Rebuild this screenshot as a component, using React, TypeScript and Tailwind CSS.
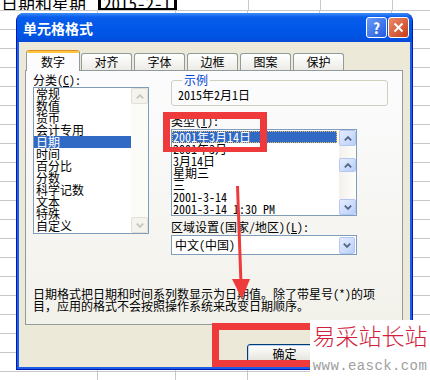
import React from "react";

const cjk = "font-['Noto_Sans_Mono_CJK_SC','Noto_Sans_CJK_SC',sans-serif]";

const cols = [98, 78, 72, 72, 72, 72];

const categories = ["常规", "数值", "货币", "会计专用", "日期", "时间", "百分比", "分数", "科学记数", "文本", "特殊", "自定义"];
const types = ["2001年3月14日", "2001年3月", "3月14日", "星期三", "三", "2001-3-14", "2001-3-14 1:30 PM"];

const Chevron = ({ down, color }: { down?: boolean; color: string }) => (
  <svg width="8" height="5" viewBox="0 0 8 5" className={down ? "rotate-180" : ""}>
    <path d="M0.8 4.3 L4 1.1 L7.2 4.3" fill="none" stroke={color} strokeWidth="1.7" />
  </svg>
);

const BlueBtn = ({ down, className = "" }: { down?: boolean; className?: string }) => (
  <div className={`flex items-center justify-center rounded-[2px] border border-[#B4C7F4] bg-gradient-to-br from-[#E6EEFE] to-[#B9CEF8] ${className}`}>
    <Chevron down={down} color="#4D6185" />
  </div>
);

const GrayBtn = ({ down }: { down?: boolean }) => (
  <div className="flex h-[16px] items-center justify-center rounded-[2px] border border-[#E2E0D6] bg-[#F4F3EE]">
    <Chevron down={down} color="#C6C4B8" />
  </div>
);

const Sheet = () => (
  <div className={`flex h-[380px] w-[430px] flex-col overflow-hidden bg-white text-black ${cjk}`}>
    <div className="flex h-[11px] shrink-0 border-b border-[#C8C8C8]">
      <div className="w-[98px] shrink-0 overflow-hidden">
        <div className="-mt-[6px] ml-[1px] whitespace-nowrap text-[17px] leading-[17px]">日期和星期</div>
      </div>
      <div className="flex w-[79px] shrink-0 justify-end overflow-hidden border-x-[3px] border-b-[2px] border-black pr-[3px]">
        <div className="-mt-[6px] whitespace-nowrap text-[17px] leading-[17px]">2015-2-1</div>
      </div>
      {cols.slice(2).map((w, i) => (
        <div key={i} style={{ width: w }} className="shrink-0 border-r border-[#C8C8C8]" />
      ))}
    </div>
    {Array.from({ length: 20 }).map((_, r) => (
      <div key={r} className="flex h-[19px] shrink-0 border-b border-[#C8C8C8]">
        {cols.map((w, i) => (
          <div key={i} style={{ width: w }} className="shrink-0 border-r border-[#C8C8C8]" />
        ))}
      </div>
    ))}
  </div>
);

const Tab = ({ label, active }: { label: string; active?: boolean }) =>
  active ? (
    <div className="relative z-10 -mb-[1px] flex h-[21px] w-[54px] flex-col overflow-hidden rounded-t-[3px] border-x border-[#919B9C] bg-[#FCFCFE]">
      <div className="h-[1px] bg-[#E68B2C]" />
      <div className="h-[2px] bg-[#FFC73C]" />
      <div className="flex flex-1 items-center justify-center pb-[1px]">{label}</div>
    </div>
  ) : (
    <div className="flex h-[17px] w-[51px] items-center justify-center rounded-t-[3px] border-x border-t border-[#919B9C] bg-gradient-to-b from-white to-[#ECEBE6]">
      {label}
    </div>
  );

const Dialog = () => (
  <div className={`absolute left-[16px] top-[13px] flex h-[357px] w-[397px] flex-col overflow-hidden rounded-t-[8px] border-x border-b border-[#0019B4] bg-[#1C5EE6] text-[12px] leading-[12px] text-black ${cjk}`}>
    <div className="flex h-[29px] shrink-0 items-center bg-[linear-gradient(to_bottom,#3D8EF8_0%,#0B5EEC_14%,#0057E8_50%,#0053E2_85%,#0748D6_100%)] pl-[6px] pr-[3px]">
      <span className="text-[14px] font-bold leading-[14px] text-white">单元格格式</span>
      <div className="ml-auto flex gap-[1px]">
        <div className="flex h-[21px] w-[21px] items-center justify-center rounded-[3px] border border-white bg-gradient-to-br from-[#6A9BF7] to-[#2258DD] text-[15px] font-bold leading-[15px] text-white">
          ?
        </div>
        <div className="flex h-[21px] w-[21px] items-center justify-center rounded-[3px] border border-white bg-gradient-to-br from-[#EB8A6A] to-[#C53A13]">
          <svg width="11" height="11" viewBox="0 0 11 11">
            <path d="M1.5 1.5 L9.5 9.5 M9.5 1.5 L1.5 9.5" stroke="white" strokeWidth="2" />
          </svg>
        </div>
      </div>
    </div>
    <div className="mx-[2px] mb-[2px] flex flex-1 flex-col bg-[#ECE9D8] pl-[6px] pr-[7px] pt-[8px]">
      <div className="flex h-[20px] items-end pl-[1px]">
        <Tab label="数字" active />
        <div className="flex gap-[2px] pl-[1px]">
          <Tab label="对齐" />
          <Tab label="字体" />
          <Tab label="边框" />
          <Tab label="图案" />
          <Tab label="保护" />
        </div>
      </div>
      <div className="flex h-[255px] flex-col border border-[#919B9C] bg-gradient-to-b from-[#FCFCFE] to-[#F2F1EA] pl-[7px] pt-[3px]">
        <div className="flex">
          <div className="flex w-[116px] flex-col">
            <div className="h-[12px]">
              分类(<span className="underline">C</span>):
            </div>
            <div className="mt-[1px] flex h-[147px] border border-[#7F9DB9] bg-white">
              <ul className="flex-1">
                {categories.map((c) => (
                  <li key={c} className={`h-[12px] whitespace-nowrap pl-[2px] ${c === "日期" ? "bg-[#316AC5] text-white" : ""}`}>
                    {c}
                  </li>
                ))}
              </ul>
              <div className="flex w-[17px] flex-col justify-between bg-[#FBFBF8]">
                <GrayBtn />
                <GrayBtn down />
              </div>
            </div>
          </div>
          <div className="ml-[22px] flex flex-col">
            <fieldset className="h-[32px] w-[217px] rounded-[3px] border border-[#D0D0BF] pl-[6px]">
              <legend className="ml-[4px] px-[2px] text-[#0046D5]">示例</legend>
              <div className="pt-[3px]">2015年2月1日</div>
            </fieldset>
            <div className="mt-[9px] h-[12px]">
              类型(<span className="underline">T</span>):
            </div>
            <div className="mt-[2px] flex h-[87px] w-[186px] border border-[#7F9DB9] bg-white">
              <ul className="flex-1 pt-[1px]">
                {types.map((t, i) => (
                  <li key={t} className={`h-[12px] whitespace-nowrap pl-[1px] ${i === 0 ? "mr-[2px] bg-[#316AC5] text-white outline-1 outline-dotted outline-offset-[-1px] outline-[#F0C060]" : ""}`}>
                    {t}
                  </li>
                ))}
              </ul>
              <div className="flex w-[17px] flex-col bg-gradient-to-r from-[#F3F1EC] to-[#FEFEFB]">
                <BlueBtn className="h-[16px]" />
                <BlueBtn className="mt-[12px] h-[14px]" />
                <div className="flex-1" />
                <BlueBtn className="h-[16px]" down />
              </div>
            </div>
            <div className="mt-[5px] h-[12px] whitespace-nowrap">
              区域设置(国家/地区)(<span className="underline">L</span>):
            </div>
            <div className="mt-[2px] flex h-[20px] w-[186px] items-center border border-[#7F9DB9] bg-white p-[1px] pl-[3px]">
              <span>中文(中国)</span>
              <BlueBtn className="ml-auto h-[17px] w-[16px]" down />
            </div>
          </div>
        </div>
        <div className="mt-[33px] whitespace-nowrap">
          日期格式把日期和时间系列数显示为日期值。除了带星号(*)的项
          <br />
          目，应用的格式不会按照操作系统来改变日期顺序。
        </div>
      </div>
      <div className="flex gap-[6px] pl-[222px] pt-[19px]">
        <div className="flex h-[19px] w-[75px] items-center justify-center rounded-[3px] border border-[#003C74] bg-gradient-to-b from-white to-[#E3E2DA] shadow-[inset_0_0_0_1px_#BCD4F6]">
          确定
        </div>
        <div className="flex h-[19px] w-[75px] items-center justify-center rounded-[3px] border border-[#003C74] bg-gradient-to-b from-white to-[#E3E2DA]">
          取消
        </div>
      </div>
    </div>
  </div>
);

const Marks = () => (
  <>
    <div className="absolute left-[163px] top-[112px] h-[40px] w-[104px] border-[7px] border-b-[5px] border-[#EE3A3A]" />
    <div className="absolute left-[212px] top-[323px] h-[44px] w-[110px] border-[7px] border-[#EE3A3A]" />
    <svg className="pointer-events-none absolute left-0 top-0" width="430" height="380">
      <path d="M237.5 186 L241 284" stroke="#EE3A3A" strokeWidth="3" />
      <polygon points="232,279 250,279 242,299" fill="#EE3A3A" />
    </svg>
    <div className="absolute left-[310px] top-[320px] flex h-[60px] w-[120px] flex-col items-center bg-white pt-[2px]">
      <div className="font-['Noto_Sans_CJK_SC',sans-serif] text-[23px] font-light leading-[26px] text-[#D2203A]">易采站长站</div>
      <div className="mt-[11px] font-['Liberation_Mono',monospace] text-[14px] leading-[14px] tracking-[0.4px] text-[#A0A0A0]">www.easck.com</div>
    </div>
  </>
);

export default function App() {
  return (
    <div className="relative h-[380px] w-[430px] overflow-hidden bg-white">
      <Sheet />
      <Dialog />
      <Marks />
    </div>
  );
}
